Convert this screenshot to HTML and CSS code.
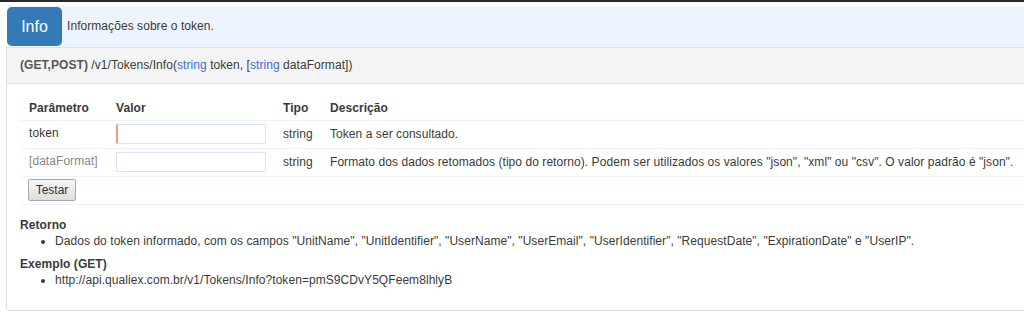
FILE: index.html
```html
<!DOCTYPE html>
<html lang="pt-BR">
<head>
  <meta charset="UTF-8" />
  <title>Tokens/Info</title>
  <link rel="stylesheet" href="styles.css">
</head>
<body>

  <div class="topbar"></div>

  <div class="wrap">
    <div class="intro">
      <span class="badge">Info</span>
      <span class="intro-text">Informações sobre o token.</span>
    </div>

    <div class="panel">
      <div class="panel-heading">
        <b>(GET,POST)</b> /v1/Tokens/Info(<span class="type">string</span> token, [<span class="type">string</span> dataFormat])
      </div>

      <div class="panel-body">
        <table class="params">
          <thead>
            <tr>
              <th class="col-name">Parâmetro</th>
              <th class="col-value">Valor</th>
              <th class="col-type">Tipo</th>
              <th>Descrição</th>
            </tr>
          </thead>
          <tbody>
            <tr>
              <td class="name">token</td>
              <td><input type="text" class="field required"></td>
              <td>string</td>
              <td>Token a ser consultado.</td>
            </tr>
            <tr>
              <td class="name optional">[dataFormat]</td>
              <td><input type="text" class="field"></td>
              <td>string</td>
              <td>Formato dos dados retomados (tipo do retorno). Podem ser utilizados os valores "json", "xml" ou "csv". O valor padrão é "json".</td>
            </tr>
            <tr>
              <td colspan="4" class="actions"><button class="btn">Testar</button></td>
            </tr>
          </tbody>
        </table>

        <h4>Retorno</h4>
        <ul>
          <li>Dados do token informado, com os campos "UnitName", "UnitIdentifier", "UserName", "UserEmail", "UserIdentifier", "RequestDate", "ExpirationDate" e "UserIP".</li>
        </ul>

        <h4>Exemplo (GET)</h4>
        <ul>
          <li>http://api.qualiex.com.br/v1/Tokens/Info?token=pmS9CDvY5QFeem8lhlyB</li>
        </ul>
      </div>
    </div>
  </div>

</body>
</html>
```

FILE: styles.css
```css
* {
  margin: 0;
  padding: 0;
  box-sizing: border-box;
}

html, body {
  width: 100vw;
  height: 100vh;
  overflow: hidden;
  background: #fff;
  font-family: 'Liberation Sans', Arial, sans-serif;
  font-size: 12px;
  letter-spacing: 0.06px;
  color: #3a3a3a;
}

.topbar {
  height: 2px;
  background: #2a2a2a;
}

.wrap {
  width: 1040px;
  padding: 4px 0 0 6px;
}

.intro {
  display: flex;
  align-items: center;
  height: 41px;
  margin-left: 1px;
  background: #eef4fd;
}

.badge {
  display: flex;
  align-items: center;
  justify-content: center;
  width: 55px;
  height: 39px;
  background: #337ab7;
  color: #fff;
  font-size: 16px;
  letter-spacing: 0;
  border-radius: 5px;
}

.intro-text {
  margin-left: 5px;
  margin-top: -1px;
}

.panel {
  border: 1px solid #ddd;
  border-top: none;
  border-radius: 0 0 4px 4px;
  height: 264px;
}

.panel-heading {
  height: 37px;
  line-height: 35px;
  padding: 0 13px;
  background: #f4f4f4;
  border-top: 1px solid #e2e2e2;
  border-bottom: 1px solid #e2e2e2;
}

.panel-heading b {
  color: #555;
}

.type {
  color: #3f6fd1;
}

.panel-body {
  padding: 12px 0 0 13px;
}

.params {
  width: 100%;
  border-collapse: collapse;
  table-layout: fixed;
}

.params th {
  text-align: left;
  font-weight: bold;
  height: 24px;
  padding: 0 8px 0 9px;
  border-bottom: 1px solid #eef2f8;
}

.params td {
  height: 28px;
  padding: 0 8px 0 9px;
  border-bottom: 1px solid #eef2f8;
  white-space: nowrap;
}

.col-name { width: 87px; }
.col-value { width: 167px; }
.col-type { width: 47px; }

.params td.name {
  vertical-align: top;
  padding-top: 5px;
}

.params td.optional {
  color: #888;
}

.field {
  display: block;
  width: 150px;
  height: 20px;
  border: 1px solid #d8e3f3;
  background: #fff;
  font: inherit;
}

.field.required {
  border-left: 2px solid #f59a78;
}

.params td.actions {
  height: 28px;
  padding-left: 8px;
}

.btn {
  display: block;
  width: 48px;
  height: 22px;
  font: inherit;
  color: #333;
  background: linear-gradient(#f6f6f6, #dedede);
  border: 1px solid #a9a9a9;
  border-radius: 2px;
}

h4 {
  font-size: 12px;
  font-weight: bold;
  line-height: 16px;
  margin-top: 12px;
}

ul {
  padding-left: 35px;
  line-height: 16px;
}

ul + h4 {
  margin-top: 7px;
}
```
